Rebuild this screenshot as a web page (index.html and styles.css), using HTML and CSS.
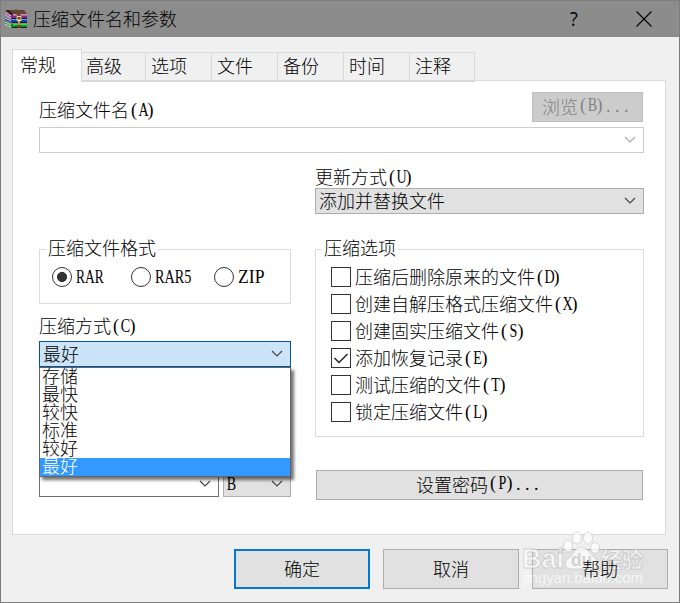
FILE: index.html
```html
<!DOCTYPE html>
<html lang="zh-CN">
<head>
<meta charset="utf-8">
<title>压缩文件名和参数</title>
<link rel="stylesheet" href="styles.css">
</head>
<body>
<main class="window">
  <header class="titlebar">
    <svg class="app-icon" width="24" height="20" viewBox="0 0 24 20">
      <path d="M4 1h16l3 4H8z" fill="#634437"/><path d="M1 1h4l4 4-1 2z" fill="#3a1b19"/>
      <path d="M1 3l6 3h16v4H8L1 7z" fill="#8d267f"/><path d="M9 6h14" stroke="#e7a4d9"/>
      <path d="M1 8l6 3h16v3H8l-7-3z" fill="#1741ae"/><path d="M9 10.500h14" stroke="#49a9f5"/>
      <path d="M1 12l6 3h16v4H8l-7-4z" fill="#078c25"/><path d="M9 15.500h14" stroke="#32e53c" stroke-width="1.500"/>
      <path d="M1 4l6 3M1 6l6 3M1 9l6 3M1 13l6 3M1 15l6 3" stroke="#ddd"/>
      <path d="M8 9.500h15M8 13.500h15M8 18.500h15" stroke="#18162d"/>
      <path d="M11 1l4 5v13" fill="none" stroke="#6d4526" stroke-width="3"/>
      <path d="M13 7.500h4v4h-4z" fill="none" stroke="#eadb91"/><path d="M15 10v6" stroke="#fff2a4"/>
    </svg>
    <h1>压缩文件名和参数</h1>
    <span class="help">?</span>
    <svg class="close" width="16" height="16" viewBox="0 0 16 16"><path d="M.5.5l15 15M15.500.5l-15 15" stroke="#000" stroke-width="1.100"/></svg>
  </header>
  <nav class="tabs">
    <span class="tab active">常规</span><span class="tab">高级</span><span class="tab">选项</span><span class="tab">文件</span><span class="tab">备份</span><span class="tab">时间</span><span class="tab">注释</span>
  </nav>
  <section class="panel">
    <div class="name-row">
      <div class="label">压缩文件名<span class="key">(<b>A</b>)</span></div>
      <div class="button browse">浏览<span class="key">(<b>B</b>)</span><span class="dots">...</span></div>
    </div>
    <div class="combo name-field"><svg class="chevron" viewBox="0 0 12 8"><path d="M1 1l5 5 5-5"/></svg></div>
    <div class="columns">
      <div class="left">
        <section class="group format">
          <h2>压缩文件格式</h2>
          <div class="radios">
            <span class="radio on"></span><span class="latin rar">RAR</span>
            <span class="radio"></span><span class="latin rar5">RAR5</span>
            <span class="radio"></span><span class="latin zip">ZIP</span>
          </div>
        </section>
        <div class="label method-label">压缩方式<span class="key">(<b>C</b>)</span></div>
        <div class="method">
          <div class="combo open"><span class="value">最好</span><svg class="chevron" viewBox="0 0 12 8"><path d="M1 1l5 5 5-5"/></svg></div>
          <div class="menu">
            <div>存储</div><div>最快</div><div>较快</div><div>标准</div><div>较好</div><div class="selected">最好</div>
          </div>
        </div>
        <div class="size-row">
          <div class="combo size"><svg class="chevron" viewBox="0 0 12 8"><path d="M1 1l5 5 5-5"/></svg></div>
          <div class="combo grey unit"><span class="key single"><b>B</b></span><svg class="chevron" viewBox="0 0 12 8"><path d="M1 1l5 5 5-5"/></svg></div>
        </div>
      </div>
      <div class="right">
        <div class="label">更新方式<span class="key">(<b>U</b>)</span></div>
        <div class="combo grey"><span class="value">添加并替换文件</span><svg class="chevron" viewBox="0 0 12 8"><path d="M1 1l5 5 5-5"/></svg></div>
        <section class="group options">
          <h2>压缩选项</h2>
          <div class="check"><i></i><span>压缩后删除原来的文件<span class="key">(<b>D</b>)</span></span></div>
          <div class="check"><i></i><span>创建自解压格式压缩文件<span class="key">(<b>X</b>)</span></span></div>
          <div class="check"><i></i><span>创建固实压缩文件<span class="key">(<b>S</b>)</span></span></div>
          <div class="check"><i><svg width="18" height="18" viewBox="0 0 18 18"><path d="M2.500 9l4.500 4.500 8.500-8.500" fill="none" stroke="#222" stroke-width="1.500"/></svg></i><span>添加恢复记录<span class="key">(<b>E</b>)</span></span></div>
          <div class="check"><i></i><span>测试压缩的文件<span class="key">(<b>T</b>)</span></span></div>
          <div class="check"><i></i><span>锁定压缩文件<span class="key">(<b>L</b>)</span></span></div>
        </section>
        <div class="button password">设置密码<span class="key">(<b>P</b>)</span><span class="dots">...</span></div>
      </div>
    </div>
  </section>
  <footer class="actions">
    <div class="button primary">确定</div><div class="button">取消</div><div class="button assist"><span>帮助</span></div>
  </footer>
  <svg class="watermark" width="128" height="62" viewBox="0 0 128 62">
    <g fill="#fff" fill-opacity=".72" stroke="#aaa" stroke-opacity=".5" stroke-width=".8">
      <ellipse cx="48" cy="17" rx="4.500" ry="6"/>
      <ellipse cx="57" cy="9" rx="4.500" ry="6"/><ellipse cx="68" cy="9" rx="4.500" ry="6"/><ellipse cx="75" cy="19" rx="4.500" ry="5.500"/>
      <path d="M61 18c6 0 8 6 13 10 6 5 5 12-2 12H52c-9 0-8-8-2-12 5-4 5-10 11-10z"/>
      <text x="2" y="39" class="bai" textLength="42" lengthAdjust="spacingAndGlyphs">Bai</text>
      <text x="81" y="38" class="jingyan">经验</text>
      <text x="3" y="54" class="url" textLength="120" lengthAdjust="spacingAndGlyphs">jingyan.baidu.com</text>
    </g>
    <text x="51" y="37" class="du" textLength="21" lengthAdjust="spacingAndGlyphs">du</text>
  </svg>
</main>
</body>
</html>
```
FILE: styles.css
```css
* { box-sizing: border-box; }
body { margin: 0; font: 300 18px/20px "Noto Sans CJK SC", sans-serif; color: #000; }
h1, h2 { margin: 0; font: inherit; }
.window { position: relative; width: 680px; height: 603px; background: #f0f0f0; border: 1px solid #7d7d7d; overflow: hidden; }
.titlebar { display: flex; align-items: center; height: 36px; padding-left: 3px; background: #8c8c8c; }
.app-icon { flex: none; margin-top: -1px; }
.titlebar h1 { margin: -2px 0 0 5px; flex: 1; }
.help { width: 14px; font: 400 20px/20px "Open Sans", sans-serif; text-align: center; transform: scaleX(.9); }
.close { margin: 0 27px 0 55px; }
.tabs { position: relative; z-index: 1; display: flex; align-items: flex-end; height: 44px; padding-left: 11px; }
.tab { width: 66px; height: 30px; padding: 2px 0 0 5px; border: 1px solid #d9d9d9; border-left: 0; margin-bottom: -1px; }
.tab:last-child { width: 65px; }
.tab.active { width: 70px; height: 33px; padding: 4px 0 0 7px; background: #fff; border-left: 1px solid #d9d9d9; border-bottom: 0; }
.tab.active + .tab { width: 64px; padding-left: 4px; }
.panel { width: 654px; height: 455px; margin-left: 11px; margin-top: -1px; padding: 11px 21px 0 26px; background: #fff; border: 1px solid #d9d9d9; }
.name-row { display: flex; justify-content: space-between; height: 35px; }
.name-row .label { padding-top: 7px; }
.label { height: 20px; white-space: nowrap; }
.button { display: flex; align-items: center; justify-content: center; padding-bottom: 2px; background: #e1e1e1; border: 1px solid #adadad; }
.browse { width: 111px; height: 30px; margin-right: 1px; background: #ccc; border-color: #bfbfbf; color: #838383; }
.key { display: inline-flex; padding-left: 2px; font: 18px/20px "Liberation Serif", serif; letter-spacing: 1.500px; transform: translateY(-1px); }
.key b { display: flex; justify-content: center; width: 9px; font-weight: 400; letter-spacing: 0; transform: scaleX(.78); }
.key.single { padding-left: 0; transform: none; }
.dots { display: inline-block; font: 18px/20px "Liberation Serif", serif; letter-spacing: 4.500px; margin-left: 2px; }
.combo { display: flex; align-items: center; height: 26px; padding: 0 7px 0 3px; border: 1px solid #707070; background: #fff; }
.value { padding-bottom: 3px; }
.chevron { width: 12px; height: 8px; margin-left: auto; fill: none; stroke: #444; stroke-width: 1.200; }
.name-field { width: 605px; border-color: #ccc; }
.name-field .chevron { stroke: #aaa; }
.grey { background: #e1e1e1; border-color: #adadad; }
.columns { display: flex; gap: 24px; }
.left { width: 252px; padding-top: 96px; }
.right { width: 329px; padding-top: 13px; }
.right > .label { height: 22px; }
.group { position: relative; border: 1px solid #dcdcdc; }
.group h2 { position: absolute; top: -13px; left: 6px; padding: 0 2px; background: #fff; white-space: nowrap; }
.format { height: 55px; }
.radios { display: flex; align-items: center; padding: 17px 0 0 12px; }
.radio { flex: none; width: 20px; height: 20px; border: 1px solid #333; border-radius: 50%; background: #fff; }
.radio.on { background: radial-gradient(circle, #333 0 4.700px, #fff 5.300px); }
.latin { font: 18px/20px "Liberation Serif", serif; transform-origin: left; margin-left: 4px; white-space: nowrap; }
.rar { width: 55px; transform: scaleX(.75); }
.rar5 { width: 59px; transform: scaleX(.79); }
.zip { width: 28px; transform: scaleX(.98); }
.method-label { margin-top: 11px; }
.method { position: relative; margin-top: 6px; }
.open { background: #cce4f7; border-color: #00569d; }
.menu { position: absolute; z-index: 2; top: 26px; left: 0; width: 252px; height: 110px; border: 1px solid #646464; background: #fff; box-shadow: 3px 3px 3px rgba(0,0,0,.55); }
.menu div { height: 18px; padding-left: 2px; line-height: 15px; }
.menu .selected { background: #3399ff; color: #fff; }
.size-row { display: flex; gap: 4px; margin-top: 104px; }
.size { width: 180px; }
.unit { width: 68px; }
.options { height: 188px; margin-top: 35px; padding: 13px 0 0 15px; }
.check { display: flex; align-items: center; height: 27px; white-space: nowrap; }
.check > span { padding-bottom: 0; }
.check i { width: 20px; height: 20px; margin-right: 4px; border: 1px solid #333; background: #fff; }
.password { height: 30px; margin: 33px 1px 0; }
.actions { display: flex; gap: 13px; margin: 14px 0 0 233px; }
.actions .button { width: 136px; height: 40px; }
.actions .primary { border: 2px solid #0078d7; }
.assist span { position: relative; z-index: 4; }
.watermark { position: absolute; left: 519px; top: 528px; z-index: 3; pointer-events: none; }
.bai { font: 700 27px "Liberation Sans", sans-serif; }
.jingyan { font: 700 21px "Noto Sans CJK SC", sans-serif; }
.url { font: 14px "Liberation Sans", sans-serif; stroke: none; }
.du { font: 700 19px "Liberation Sans", sans-serif; fill: #d2d2d2; }
```
